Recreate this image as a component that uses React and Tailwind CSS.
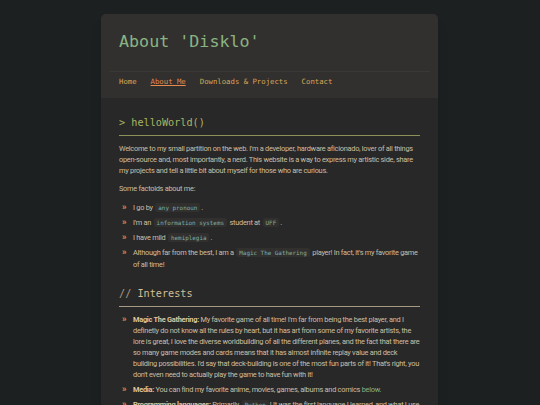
import React from 'react';

const mono = { fontFamily: '"DejaVu Sans Mono", "Liberation Mono", monospace' };

function Code({ children }) {
  return (
    <code
      style={mono}
      className="bg-[#32302f] text-[#7daea3] text-[5.9px] tracking-normal px-[3px] py-[1.5px] rounded-[2px] mx-[1px]"
    >
      {children}
    </code>
  );
}

function Item({ children }) {
  return (
    <li className="flex gap-[3px]">
      <span className="text-[#e78a4e] font-bold w-[8px] shrink-0 text-[9px] leading-[11px]">»</span>
      <div>{children}</div>
    </li>
  );
}

export default function App() {
  return (
    <div
      className="min-h-screen bg-[#1d2021] pt-[14px] text-[#cdbfa3] text-[7.4px] tracking-[-0.27px] leading-[11px]"
      style={{ fontFamily: 'Roboto, "Noto Sans", sans-serif' }}
    >
      <div className="w-[337px] ml-[101px] rounded-t-[5px] overflow-hidden bg-[#282828] shadow-lg">
        {/* header */}
        <div className="bg-[#32302f]">
          <div className="px-[18px] pt-[14px] pb-[17px]">
            <h1 style={mono} className="text-[#89b482] text-[16.7px] tracking-normal leading-[26px]">
              About 'Disklo'
            </h1>
          </div>
          <nav
            style={mono}
            className="mx-[8px] border-t border-[#3a3735] px-[10px] pt-[4px] pb-[11px] leading-[11px] flex gap-[14px] text-[7.3px] tracking-normal text-[#d8a657]"
          >
            <span>Home</span>
            <span className="text-[#e78a4e] underline">About Me</span>
            <span>Downloads &amp; Projects</span>
            <span>Contact</span>
          </nav>
        </div>

        {/* body */}
        <div className="px-[18px] pt-[17px] pb-6">
          <h2 style={mono} className="text-[#a9b665] text-[10.2px] tracking-normal leading-[16px] pb-[4px] border-b border-[#8c9157]">
            &gt; helloWorld()
          </h2>
          <p className="mt-[7px]">
            Welcome to my small partition on the web. I'm a developer, hardware aficionado, lover of all things
            open-source and, most importantly, a nerd. This website is a way to express my artistic side, share
            my projects and tell a little bit about myself for those who are curious.
          </p>
          <p className="mt-[7px]">Some factoids about me:</p>
          <ul className="mt-[7.5px] pl-[3px] flex flex-col gap-[3px]">
            <Item>I go by <Code>any pronoun</Code>.</Item>
            <Item>I'm an <Code>information systems</Code> student at <Code>UFF</Code>.</Item>
            <Item>I have mild <Code>hemiplegia</Code>.</Item>
            <Item>
              Although far from the best, I am a <Code>Magic The Gathering</Code> player! In fact, it's my favorite game
              of all time!
            </Item>
          </ul>

          <h2
            style={mono}
            className="mt-[16px] text-[#d4be98] text-[10.2px] tracking-normal leading-[16px] pb-[4px] border-b border-[#a89984]"
          >
            <span className="text-[#a89984]">//</span> Interests
          </h2>
          <ul className="mt-[7px] pl-[3px] flex flex-col gap-[4px]">
            <Item>
              <b className="text-[#ddc7a1]">Magic The Gathering:</b> My favorite game of all time! I'm far from being the best player, and I
              definetly do not know all the rules by heart, but it has art from some of my favorite artists, the
              lore is great, I love the diverse worldbuilding of all the different planes, and the fact that there
              are so many game modes and cards means that it has almost infinite replay value and deck
              building possibilities. I'd say that deck-building is one of the most fun parts of it! That's right,
              you don't even need to actually play the game to have fun with it!
            </Item>
            <Item>
              <b className="text-[#ddc7a1]">Media:</b> You can find my favorite anime, movies, games, albums and comics{' '}
              <span className="text-[#89b482]">below.</span>
            </Item>
            <Item>
              <b className="text-[#ddc7a1]">Programming languages:</b> Primarily <Code>Python</Code>! It was the first language I learned, and what I use
              the most for my personal scripts and whenever performance is not an issue. Been getting into
              other languages lately as well.
            </Item>
          </ul>
        </div>
      </div>
    </div>
  );
}
